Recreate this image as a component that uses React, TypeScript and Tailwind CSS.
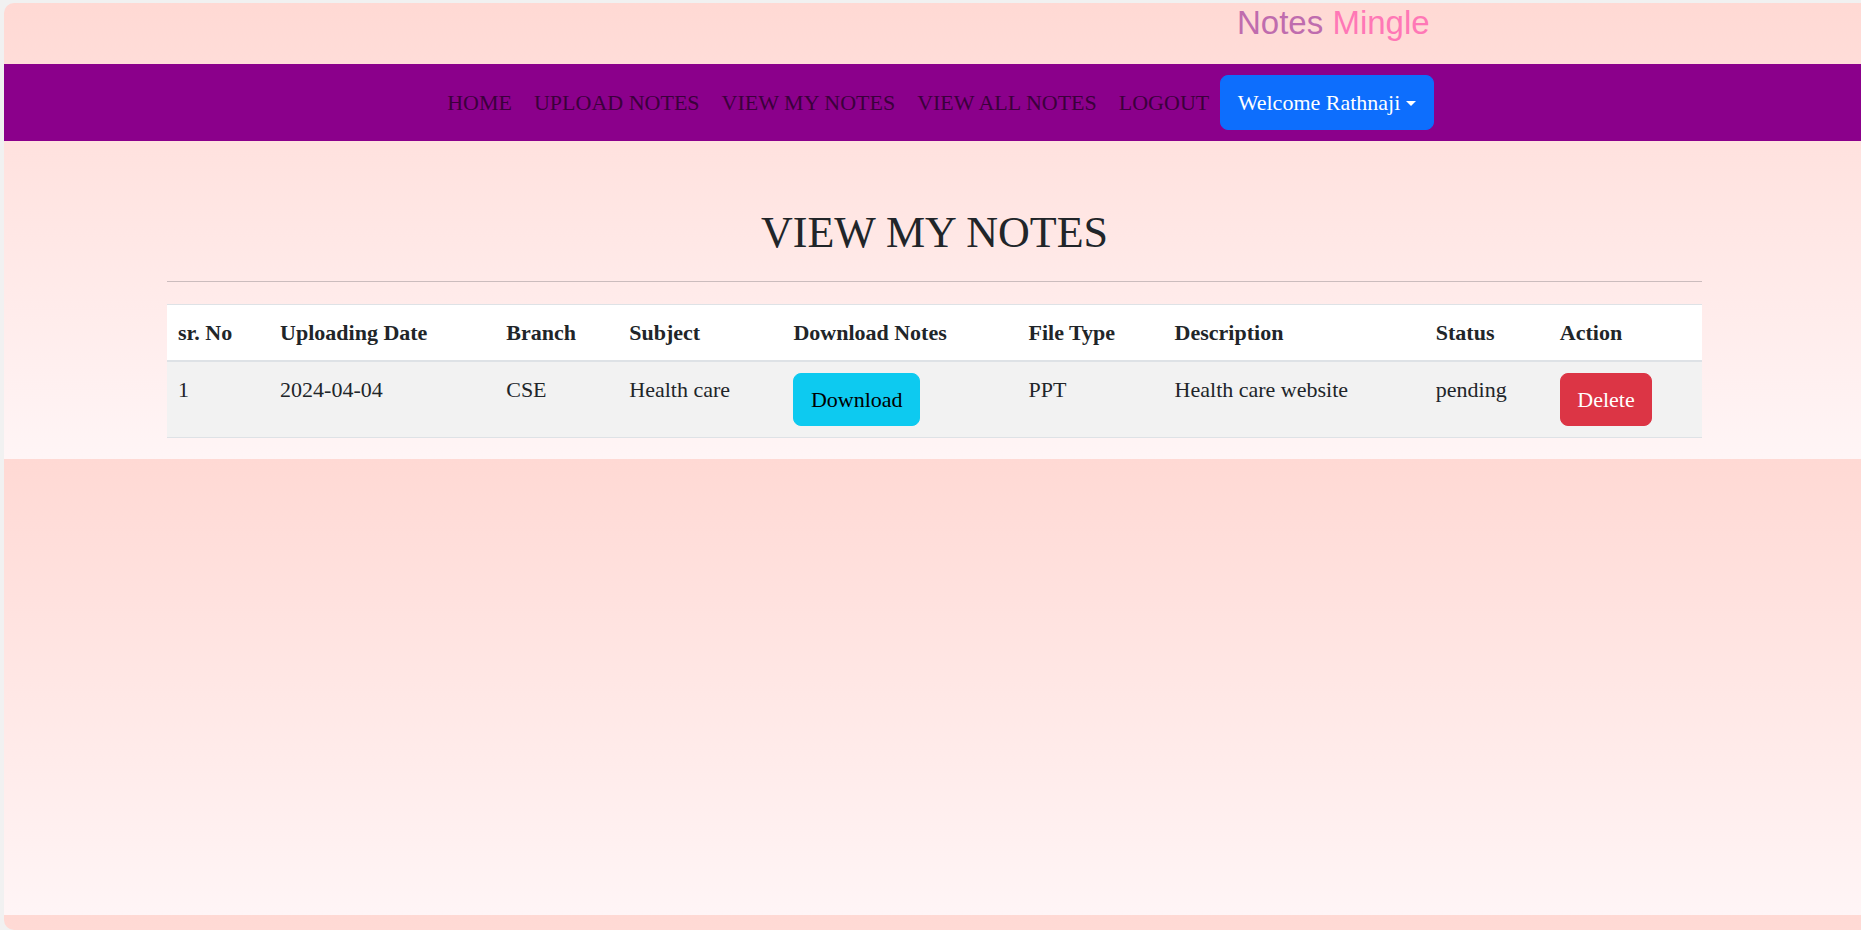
import React from "react";

const cols = [102, 226, 123, 164, 235, 146, 261, 124, 153];
const heads = [
  "sr. No",
  "Uploading Date",
  "Branch",
  "Subject",
  "Download Notes",
  "File Type",
  "Description",
  "Status",
  "Action",
];

export default function App() {
  return (
    <div className="h-[930px] w-full overflow-hidden bg-[#f1f1f1] pt-[3px] pl-[4px]">
      <div className="h-[927px] overflow-hidden rounded-l-[10px] bg-[linear-gradient(to_bottom,#ffd9d4,#fff5f6)] bg-[length:100%_456px] bg-repeat-y font-['Liberation_Serif','Times_New_Roman',serif] text-[#212529]">
        {/* header */}
        <div className="h-[61px] pt-[3px] pl-[1233px]">
          <div className="font-['Liberation_Sans',Arial,sans-serif] text-[33px] leading-[33px] whitespace-nowrap">
            <span className="text-[#bf6cae]">Notes</span>{" "}
            <span className="text-[#ff78b6]">Mingle</span>
          </div>
        </div>

        {/* nav */}
        <nav className="flex h-[77px] items-center justify-center bg-[#8b008b] pl-[5px]">
          <ul className="flex items-center text-[22px] leading-[33px] text-[#3b003b]">
            <li className="px-[11px]">HOME</li>
            <li className="px-[11px]">UPLOAD NOTES</li>
            <li className="px-[11px]">VIEW MY NOTES</li>
            <li className="px-[11px]">VIEW ALL NOTES</li>
            <li className="px-[11px]">LOGOUT</li>
            <li>
              <button className="flex items-center rounded-[8px] border border-[#0d6efd] bg-[#0d6efd] px-[16.5px] py-[10px] text-[22px] leading-[33px] text-white whitespace-nowrap">
                Welcome Rathnaji
                <span className="ml-[6px] mt-[1px] inline-block h-0 w-0 border-x-[5px] border-t-[5px] border-b-0 border-x-transparent border-t-white" />
              </button>
            </li>
          </ul>
        </nav>

        {/* content */}
        <div className="ml-[163px] w-[1535px] pt-[66px]">
          <h2 className="text-center text-[44px] leading-[52.8px] font-normal">VIEW MY NOTES</h2>
          <div className="mt-[21px] h-px w-full bg-[#cbbcbd]" />
          <table className="mt-[22px] w-full table-fixed border-collapse border-t border-[#dee2e6] text-[22px] leading-[33px]">
            <colgroup>
              {cols.map((w, i) => (
                <col key={i} style={{ width: w }} />
              ))}
            </colgroup>
            <thead>
              <tr className="bg-white border-b-2 border-[#dee2e6]">
                {heads.map((h) => (
                  <th key={h} className="p-[11px] text-left font-bold whitespace-nowrap">
                    {h}
                  </th>
                ))}
              </tr>
            </thead>
            <tbody>
              <tr className="bg-[#f2f2f2] border-b border-[#dee2e6] align-top">
                <td className="p-[11px]">1</td>
                <td className="p-[11px]">2024-04-04</td>
                <td className="p-[11px]">CSE</td>
                <td className="p-[11px]">Health care</td>
                <td className="p-[11px]">
                  <button className="rounded-[8px] border border-[#0dcaf0] bg-[#0dcaf0] px-[16.5px] py-[9px] text-[22px] leading-[33px] text-black">
                    Download
                  </button>
                </td>
                <td className="p-[11px]">PPT</td>
                <td className="p-[11px] whitespace-nowrap">Health care website</td>
                <td className="p-[11px]">pending</td>
                <td className="p-[11px]">
                  <button className="rounded-[8px] border border-[#dc3545] bg-[#dc3545] px-[16.5px] py-[9px] text-[22px] leading-[33px] text-white">
                    Delete
                  </button>
                </td>
              </tr>
            </tbody>
          </table>
        </div>
      </div>
    </div>
  );
}
